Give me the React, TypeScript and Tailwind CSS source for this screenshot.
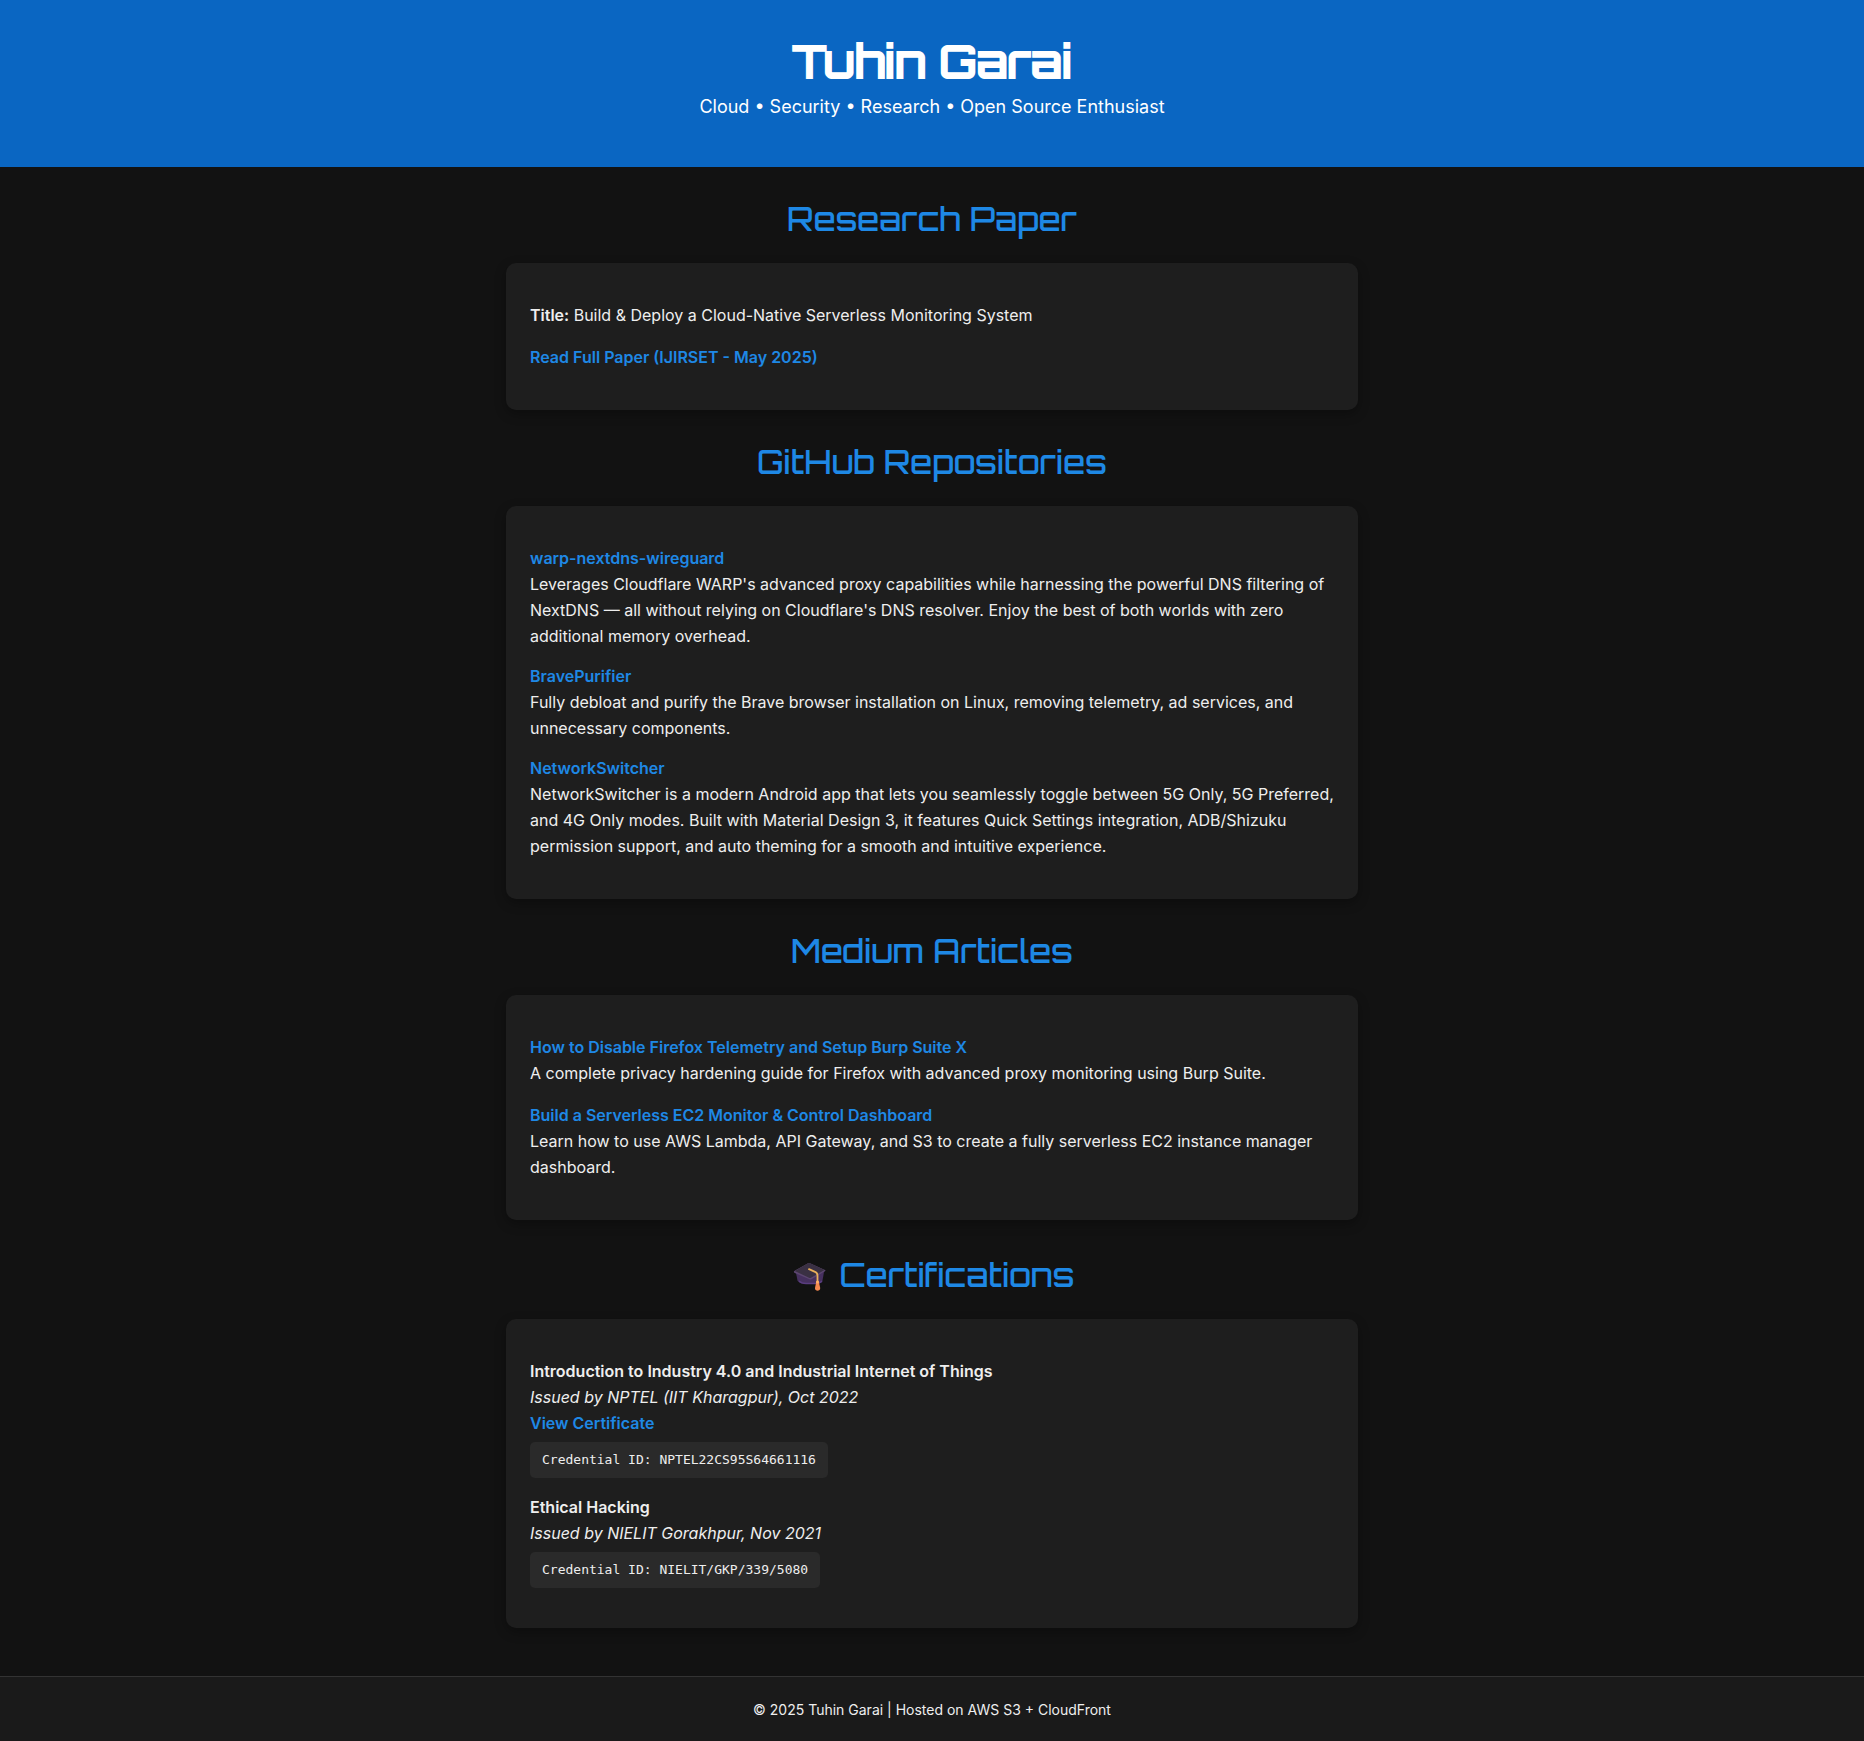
import type { ReactNode } from "react";

function CapIcon() {
  return (
    <svg viewBox="0 0 34 30" className="mt-1 ml-1 h-[30px] w-[34px]" aria-hidden="true">
      <path d="M3 11l1.500 7.500C6 21 9 22 13 22h9c4.500 0 7-1.500 7.500-3.500L31 10z" fill="#46305f" />
      <path d="M6 19c2 2 4.500 2.500 7 2.500h9c3 0 5.500-.8 7-2.500" fill="none" stroke="#5a3d80" strokeWidth="1.500" />
      <path d="M.8 9.700Q.8 9 2 8.400L15 1.300q1-.5 2 0l15 6.700q1 .6 0 1.200L18.500 17.200q-1 .5-2 .1L1.800 11Q.8 10.500.8 9.700z" fill="#5c4670" />
      <path d="M1.800 9 15 1.300q1-.5 2 0L31.500 8 18 15.800q-1 .5-2 0z" fill="#3a3043" />
      <path d="M16 7.200l6 2.600q2.500 1.200 2.500 3.700v7" fill="none" stroke="#eab05a" strokeWidth="1.800" strokeLinecap="round" strokeLinejoin="round" />
      <path d="M23.300 19.500h2.500l1.400 6.500c.3 3.500-5.600 3.500-5.200 0z" fill="#f5874f" />
      <circle cx="24.500" cy="20" r="1.500" fill="#ffb066" />
    </svg>
  );
}

type SectionProps = { title: string; icon?: ReactNode; loose?: boolean; children: ReactNode };

function Section({ title, icon, loose, children }: SectionProps) {
  return (
    <section className={icon ? "pt-[29px]" : "pt-[26px]"}>
      <h2 className="mb-[18px] flex items-center justify-center gap-3 text-center font-['Orbitron',sans-serif] text-[32px] leading-[52px] font-medium text-[#1e88e5]">
        {icon}
        {title}
      </h2>
      <div
        className={`flex flex-col rounded-[10px] bg-[#1e1e1e] px-6 pt-[39px] pb-10 shadow-[0_4px_12px_rgba(0,0,0,0.3)] ${
          loose ? "gap-4" : "gap-3.5"
        }`}
      >
        {children}
      </div>
    </section>
  );
}

function Link({ children }: { children: ReactNode }) {
  return (
    <a href="#" className="font-semibold text-[#1e88e5] hover:underline">
      {children}
    </a>
  );
}

function Entry({ title, children }: { title: string; children: ReactNode }) {
  return (
    <p>
      <Link>{title}</Link>
      <br />
      {children}
    </p>
  );
}

function Credential({ children }: { children: ReactNode }) {
  return (
    <code className="mt-1.5 block w-fit rounded-[5px] bg-[#2a2a2a] px-3 py-2 font-['DejaVu_Sans_Mono',monospace] text-[13px] leading-5">
      {children}
    </code>
  );
}

export default function App() {
  return (
    <div className="min-h-screen bg-[#121212] font-['Inter',sans-serif] text-base leading-[26px] text-[#eeeeee]">
      <header className="bg-[#0a66c2] px-4 pt-[30px] pb-[45px] text-center text-white">
        <h1 className="font-['Orbitron',sans-serif] text-[45px] leading-[62px] font-medium [-webkit-text-stroke:2px_white]">
          Tuhin Garai
        </h1>
        <p className="text-lg leading-[30px]">Cloud • Security • Research • Open Source Enthusiast</p>
      </header>

      <main className="mx-auto max-w-[900px] px-6 pb-12">
        <Section title="Research Paper" loose>
          <p>
            <strong className="font-semibold">Title:</strong> Build &amp; Deploy a Cloud-Native Serverless Monitoring
            System
          </p>
          <p>
            <Link>Read Full Paper (IJIRSET - May 2025)</Link>
          </p>
        </Section>

        <Section title="GitHub Repositories">
          <Entry title="warp-nextdns-wireguard">
            Leverages Cloudflare WARP's advanced proxy capabilities while harnessing the powerful DNS filtering of
            NextDNS — all without relying on Cloudflare's DNS resolver. Enjoy the best of both worlds with zero
            additional memory overhead.
          </Entry>
          <Entry title="BravePurifier">
            Fully debloat and purify the Brave browser installation on Linux, removing telemetry, ad services, and
            unnecessary components.
          </Entry>
          <Entry title="NetworkSwitcher">
            NetworkSwitcher is a modern Android app that lets you seamlessly toggle between 5G Only, 5G Preferred, and
            4G Only modes. Built with Material Design 3, it features Quick Settings integration, ADB/Shizuku permission
            support, and auto theming for a smooth and intuitive experience.
          </Entry>
        </Section>

        <Section title="Medium Articles" loose>
          <Entry title="How to Disable Firefox Telemetry and Setup Burp Suite X">
            A complete privacy hardening guide for Firefox with advanced proxy monitoring using Burp Suite.
          </Entry>
          <Entry title="Build a Serverless EC2 Monitor & Control Dashboard">
            Learn how to use AWS Lambda, API Gateway, and S3 to create a fully serverless EC2 instance manager
            dashboard.
          </Entry>
        </Section>

        <Section title="Certifications" icon={<CapIcon />} loose>
          <div>
            <strong className="font-semibold">Introduction to Industry 4.0 and Industrial Internet of Things</strong>
            <br />
            <em>Issued by NPTEL (IIT Kharagpur), Oct 2022</em>
            <br />
            <Link>View Certificate</Link>
            <Credential>Credential ID: NPTEL22CS95S64661116</Credential>
          </div>
          <div>
            <strong className="font-semibold">Ethical Hacking</strong>
            <br />
            <em>Issued by NIELIT Gorakhpur, Nov 2021</em>
            <Credential>Credential ID: NIELIT/GKP/339/5080</Credential>
          </div>
        </Section>
      </main>

      <footer className="border-t border-[#333333] bg-[#1a1a1a] px-4 py-5 text-center text-sm leading-[25px]">
        © 2025 Tuhin Garai | Hosted on AWS S3 + CloudFront
      </footer>
    </div>
  );
}
